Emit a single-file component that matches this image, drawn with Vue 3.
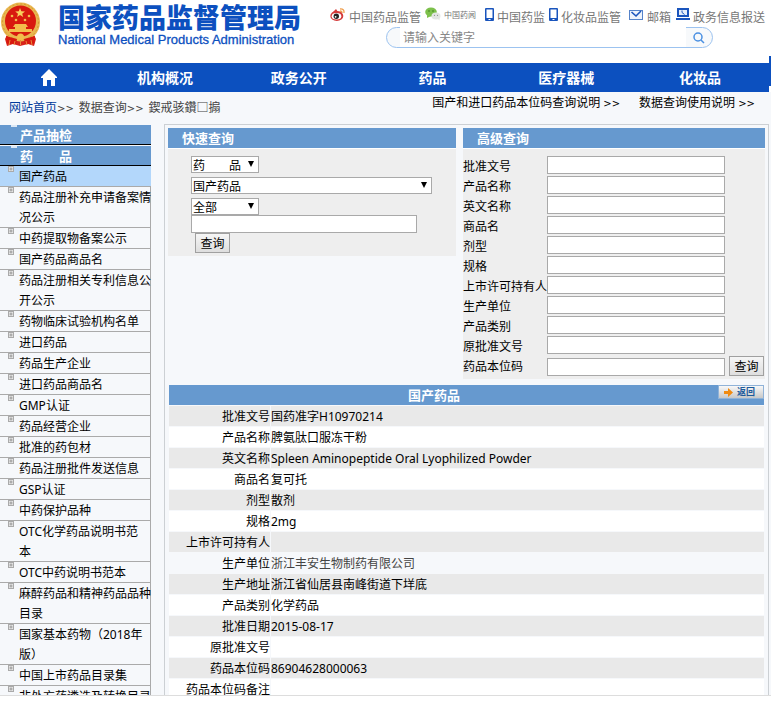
<template>
  <div class="page">
    <header class="header">
      <a class="logo" href="#">
        <svg class="logo__emblem" width="41" height="45" viewBox="0 0 41 45">
          <path d="M7 33 L5 37 L7 44 L13 42 L20 44 L28 42 L34 44 L36 37 L34 33 Z" fill="#d8241c" />
          <circle cx="20.500" cy="20" r="19.500" fill="#e9b64f" />
          <circle cx="20.500" cy="20" r="18" fill="none" stroke="#d29a35" stroke-width="1" stroke-dasharray="2 2" />
          <circle cx="20.500" cy="19" r="15.500" fill="#d8190f" />
          <path d="M20 6 L21.300 9.300 L25 9.500 L22.200 11.700 L23.200 15 L20 13.100 L17 15 L18 11.700 L15.200 9.500 L18.800 9.300 Z" fill="#f8cf5d" />
          <g fill="#f3bd4c">
            <circle cx="12" cy="14" r="1.300" />
            <circle cx="16" cy="18" r="1.300" />
            <circle cx="25" cy="18" r="1.300" />
            <circle cx="29" cy="14" r="1.300" />
            <path d="M15 22 H26 L28 25 H13 Z" />
            <path d="M15 25 H26 V27 H32 V30 H9 V27 H15 Z" />
            <circle cx="20.500" cy="35" r="3.500" />
          </g>
          <path d="M6 34 L17 37 L16 42 L7 42 Z M35 34 L24 37 L25 42 L34 42 Z" fill="#d8190f" />
          <path d="M10 38 L9 43 M15 39 L14 43 M20.500 38 V43 M26 39 L27 43 M31 38 L32 43" stroke="#e98a3c" stroke-width="1" />
        </svg>
        <span class="logo__text">
          <strong class="logo__title">国家药品监督管理局</strong>
          <span class="logo__sub">National Medical Products Administration</span>
        </span>
      </a>

      <div class="tools">
        <div class="tools__links">
          <a class="tool" href="#">
            <svg width="16" height="15" viewBox="0 0 16 15">
              <path d="M10 2 Q14.500 1.500 14 6 M10 4 Q12 4 12 6" fill="none" stroke="#f0a050" stroke-width="1.300" />
              <ellipse cx="6.800" cy="9" rx="6.500" ry="5" fill="#d43a3a" />
              <path d="M2 6 L6 2 L8 5 Z" fill="#d43a3a" />
              <ellipse cx="6.500" cy="9.300" rx="4.800" ry="3.300" fill="#fff" />
              <circle cx="6.300" cy="9.300" r="2.700" fill="#222" />
              <circle cx="5.600" cy="9.800" r="0.900" fill="#fff" />
            </svg>
            <span>中国药品监管</span>
          </a>
          <a class="tool tool--small" href="#">
            <svg width="16" height="15" viewBox="0 0 16 15">
              <ellipse cx="6" cy="5" rx="5.800" ry="4.500" fill="#7cc04b" />
              <path d="M2 8 L2 11 L6 9 Z" fill="#7cc04b" />
              <circle cx="4" cy="4" r="0.800" fill="#3f7a20" />
              <circle cx="8" cy="4" r="0.800" fill="#3f7a20" />
              <ellipse cx="11" cy="9" rx="4.500" ry="3.600" fill="#e3e6e3" />
              <path d="M12 11 L14.500 13.500 L14.500 10 Z" fill="#e3e6e3" />
              <circle cx="9.500" cy="8.300" r="0.600" fill="#888" />
              <circle cx="12.500" cy="8.300" r="0.600" fill="#888" />
            </svg>
            <span>中国药闻</span>
          </a>
          <a class="tool" href="#">
            <svg width="9" height="15" viewBox="0 0 9 15">
              <rect x="0" y="1" width="9" height="13" rx="1" fill="#1a55bd" />
              <rect x="1.500" y="2.500" width="6" height="8.500" fill="#fff" />
              <rect x="3.500" y="12" width="2" height="1" fill="#fff" />
            </svg>
            <span>中国药监</span>
          </a>
          <a class="tool" href="#">
            <svg width="9" height="15" viewBox="0 0 9 15">
              <rect x="0" y="1" width="9" height="13" rx="1" fill="#1a55bd" />
              <rect x="1.500" y="2.500" width="6" height="8.500" fill="#fff" />
              <rect x="3.500" y="12" width="2" height="1" fill="#fff" />
            </svg>
            <span>化妆品监管</span>
          </a>
          <a class="tool tool--mail" href="#">
            <svg width="14" height="15" viewBox="0 0 14 15">
              <rect x="0.500" y="3.500" width="13" height="9" fill="#edf3fc" stroke="#5583c9" />
              <path d="M2.500 5 L7 9 L12 4" fill="none" stroke="#1a55bd" stroke-width="1.600" />
            </svg>
            <span>邮箱</span>
          </a>
          <a class="tool tool--report" href="#">
            <svg width="14" height="15" viewBox="0 0 14 15">
              <rect x="2" y="2" width="10" height="7" fill="#e6effb" stroke="#1a55bd" stroke-width="2" />
              <path d="M6 3.500 V5.500 L8.500 7.500" fill="none" stroke="#1a55bd" />
              <rect x="0" y="11" width="14" height="2" fill="#1a55bd" />
            </svg>
            <span>政务信息报送</span>
          </a>
        </div>
        <form class="search" @submit.prevent>
          <input v-model="keyword" class="search__input" type="text" placeholder="请输入关键字" aria-label="请输入关键字" />
          <button class="search__btn" type="submit" aria-label="搜索">
            <svg width="12" height="12" viewBox="0 0 12 12">
              <circle cx="5" cy="5" r="4" fill="none" stroke="#4a90e2" stroke-width="1.500" />
              <path d="M8 8 L11 11" stroke="#4a90e2" stroke-width="1.500" />
            </svg>
          </button>
        </form>
      </div>
    </header>

    <nav class="nav">
      <a class="nav__home" href="#" aria-label="首页">
        <svg width="16" height="17" viewBox="0 0 16 17">
          <path d="M8 0 L16 8 V9 H14 V17 H10 V11 H6 V17 H2 V9 H0 V8 Z" fill="#fff" />
        </svg>
      </a>
      <a v-for="item in navItems" :key="item" class="nav__item" href="#">{{ item }}</a>
    </nav>

    <div class="content">
      <div class="crumbs">
        <div class="crumbs__path">
          <span><a class="crumbs__home" href="#">网站首页</a><span class="arrows">&gt;&gt;</span></span>
          <span><a href="#">数据查询</a><span class="arrows">&gt;&gt;</span></span>
          <span>鍥戒骇鑽□搧</span>
        </div>
        <div class="crumbs__help">
          <a href="#">国产和进口药品本位码查询说明 <span class="arrows">&gt;&gt;</span></a>
          <a href="#">数据查询使用说明 <span class="arrows">&gt;&gt;</span></a>
        </div>
      </div>

      <div class="columns">
        <aside class="side">
          <a v-for="group in groups" :key="group" class="side__group" href="#">{{ group }}</a>
          <ul class="side__list">
            <li
              v-for="(item, i) in sideItems"
              :key="item"
              class="side__item"
              :class="{ 'side__item--active': i === 0 }"
            >
              <svg class="side__icon" width="6" height="6" viewBox="0 0 6 6">
                <rect x="0.500" y="0.500" width="5" height="5" fill="#e4e4e4" stroke="#aaa" />
                <path d="M1.500 3 H4.500 M3 1.500 V4.500" stroke="#999" />
              </svg>
              <a href="#">{{ item }}</a>
            </li>
          </ul>
        </aside>

        <main class="main">
          <div class="forms">
            <section class="panel panel--quick">
              <h2 class="panel__title">快速查询</h2>
              <form class="quick" @submit.prevent>
                <span class="pick">
                  <select aria-label="类别"><option>药　　品</option></select>
                </span>
                <span class="pick pick--wide">
                  <select aria-label="数据库"><option>国产药品</option></select>
                </span>
                <span class="pick pick--last">
                  <select aria-label="范围"><option>全部</option></select>
                </span>
                <input class="field quick__input" type="text" aria-label="关键字" />
                <button class="btn quick__btn" type="submit">查询</button>
              </form>
            </section>

            <section class="panel panel--advanced">
              <h2 class="panel__title">高级查询</h2>
              <form class="advanced" @submit.prevent>
                <div v-for="(name, i) in fields" :key="name" class="advanced__row">
                  <label :for="'field-' + i">{{ name }}</label>
                  <input :id="'field-' + i" class="field" type="text" />
                  <button v-if="i === fields.length - 1" class="btn" type="submit">查询</button>
                </div>
              </form>
            </section>
          </div>

          <table class="result">
            <colgroup>
              <col class="result__names" />
              <col />
            </colgroup>
            <thead>
              <tr>
                <th colspan="2">
                  <div class="result__head">
                    <span class="result__title">国产药品</span>
                    <button class="back" type="button">
                      <svg width="9" height="9" viewBox="0 0 9 9">
                        <path d="M0 3 H4 V0 L9 4.500 L4 9 V6 H0 Z" fill="#f08a10" />
                      </svg>
                      返回
                    </button>
                  </div>
                </th>
              </tr>
            </thead>
            <tbody>
              <tr v-for="row in rows" :key="row.label" :class="{ linked: row.link }">
                <th scope="row">{{ row.label }}</th>
                <td>
                  <a v-if="row.link" href="#">{{ row.value }}</a>
                  <template v-else>{{ row.value }}</template>
                </td>
              </tr>
            </tbody>
          </table>
        </main>
      </div>
    </div>
  </div>
</template>

<script setup>
import { ref } from 'vue';

const keyword = ref('');

const navItems = ['机构概况', '政务公开', '药品', '医疗器械', '化妆品'];

const groups = ['产品抽检', '药　　品'];

const sideItems = [
  '国产药品',
  '药品注册补充申请备案情\n况公示',
  '中药提取物备案公示',
  '国产药品商品名',
  '药品注册相关专利信息公\n开公示',
  '药物临床试验机构名单',
  '进口药品',
  '药品生产企业',
  '进口药品商品名',
  'GMP认证',
  '药品经营企业',
  '批准的药包材',
  '药品注册批件发送信息',
  'GSP认证',
  '中药保护品种',
  'OTC化学药品说明书范\n本',
  'OTC中药说明书范本',
  '麻醉药品和精神药品品种\n目录',
  '国家基本药物（2018年\n版）',
  '中国上市药品目录集',
  '非处方药遴选及转换目录',
];

const fields = [
  '批准文号',
  '产品名称',
  '英文名称',
  '商品名',
  '剂型',
  '规格',
  '上市许可持有人',
  '生产单位',
  '产品类别',
  '原批准文号',
  '药品本位码',
];

const rows = [
  { label: '批准文号', value: '国药准字H10970214' },
  { label: '产品名称', value: '脾氨肽口服冻干粉' },
  { label: '英文名称', value: 'Spleen Aminopeptide Oral Lyophilized Powder' },
  { label: '商品名', value: '复可托' },
  { label: '剂型', value: '散剂' },
  { label: '规格', value: '2mg' },
  { label: '上市许可持有人', value: '' },
  { label: '生产单位', value: '浙江丰安生物制药有限公司', link: true },
  { label: '生产地址', value: '浙江省仙居县南峰街道下垟底' },
  { label: '产品类别', value: '化学药品' },
  { label: '批准日期', value: '2015-08-17' },
  { label: '原批准文号', value: '' },
  { label: '药品本位码', value: '86904628000063' },
  { label: '药品本位码备注', value: '' },
];
</script>

<style>
body {
  background: #fff;
}
</style>

<style scoped>
.page,
.page * {
  box-sizing: border-box;
}

.page {
  display: flex;
  flex-direction: column;
  height: 100vh;
  padding-bottom: 6px;
  overflow: hidden;
  font-family: "Noto Sans", "Noto Sans CJK SC", sans-serif;
  font-size: 12px;
  line-height: 20px;
  color: #000;
}

a {
  color: inherit;
  text-decoration: none;
}

input,
select,
button {
  font-family: inherit;
  font-size: 12px;
  color: inherit;
  margin: 0;
}

svg {
  display: block;
  flex: none;
}

.arrows {
  font-family: "DejaVu Sans", sans-serif;
  font-size: 10px;
}

/* header */
.header {
  display: flex;
  justify-content: space-between;
  flex: none;
  height: 63px;
}

.logo {
  display: flex;
  gap: 17px;
  padding-top: 2px;
  color: #0c50bf;
  white-space: nowrap;
}

.logo__text {
  display: flex;
  flex-direction: column;
}

.logo__title {
  font-size: 27px;
  font-weight: 900;
  line-height: 32px;
}

.logo__sub {
  font-family: "Liberation Sans", sans-serif;
  font-size: 13px;
  line-height: 12px;
  -webkit-text-stroke: 0.3px #0c50bf;
}

.tools {
  padding: 7px 6px 0 0;
  color: #777;
  white-space: nowrap;
}

.tools__links {
  display: flex;
  gap: 4px;
  height: 20px;
}

.tool {
  display: flex;
  gap: 3px;
}

.tool span {
  line-height: 22px;
}

.tool--small {
  margin-right: 5px;
}

.tool--small span {
  font-size: 8px;
  line-height: 16px;
}

.tool--mail {
  gap: 4px;
  margin-left: 4px;
}

.tool--report {
  margin-left: 1px;
}

.search {
  display: flex;
  width: 327px;
  height: 21px;
  margin-left: 56px;
  border: 1px solid #9cc3f0;
  border-radius: 11px;
  background: #f7f9fb;
}

.search__input {
  flex: 1;
  min-width: 0;
  height: 20px;
  margin: -1px 0 0 13px;
  padding: 0 3px;
  border: 0;
  outline: 0;
  background: #fff;
}

.search__input::placeholder {
  color: #888;
  opacity: 1;
}

.search__btn {
  display: flex;
  align-items: center;
  justify-content: center;
  width: 26px;
  padding: 0;
  border: 0;
  background: none;
}

/* nav */
.nav {
  position: relative;
  display: flex;
  flex: none;
  height: 29px;
  margin-right: 2px;
  padding-right: 2px;
  background: #0c50bf;
  color: #fff;
  font-size: 14px;
  font-weight: bold;
  line-height: 30px;
}

/* edge of the drop-down layer beside the bar */
.nav::after {
  content: '';
  position: absolute;
  top: -7px;
  right: -2px;
  width: 2px;
  height: 30px;
  background: #0c50bf;
}

.nav__home {
  display: flex;
  align-items: center;
  justify-content: center;
  width: 98px;
}

.nav__item {
  flex: 1;
  text-align: center;
}

/* content */
.content {
  display: flex;
  flex-direction: column;
  flex: 1;
  min-height: 0;
  overflow: hidden;
  background: #f6f8fb;
  border-bottom: 1px solid #ddd;
}

.crumbs {
  display: flex;
  justify-content: space-between;
  flex: none;
  height: 32px;
  padding: 0 16px 0 9px;
  white-space: nowrap;
}

.crumbs__path {
  display: flex;
  gap: 5px;
  padding-top: 6px;
  color: #444;
}

.crumbs__home {
  color: #003a9b;
}

.crumbs__help {
  display: flex;
  gap: 19px;
  padding-top: 1px;
}

.columns {
  display: flex;
  gap: 13px;
  flex: 1;
  min-height: 0;
}

/* sidebar */
.side {
  flex: none;
  width: 151px;
  padding-top: 1px;
}

.side__group {
  display: block;
  height: 20px;
  margin-bottom: 1px;
  padding-left: 20px;
  background: #6699cf linear-gradient(#dce8f5, #dce8f5) 11px 0 / 6px 2px no-repeat;
  border-bottom: 1px solid #000;
  color: #fff;
  font-size: 13px;
  font-weight: bold;
}

.side__group:last-of-type {
  margin-bottom: 0;
}

.side__list {
  margin: 0;
  padding: 0;
  list-style: none;
}

.side__item {
  display: flex;
  gap: 5px;
  padding-left: 8px;
  border-bottom: 1px solid #aaa;
  box-shadow: inset -1px 0 #aaa;
  white-space: pre;
}

.side__item a {
  margin-bottom: -1px;
  padding-top: 1px;
}

.side__item--active {
  background: #b3d7fb;
  box-shadow: none;
}

/* main */
.main {
  flex: 1;
  min-width: 0;
  margin-right: 2px;
  padding: 3px 3px 0;
  border: 1px solid #ccd0d4;
  border-bottom: 0;
}

.forms {
  display: flex;
  align-items: flex-start;
  gap: 7px;
  margin-bottom: 5px;
}

.panel {
  background: #eee;
}

.panel--quick {
  flex: 288;
}

.panel--advanced {
  flex: 302;
}

.panel__title {
  height: 21px;
  margin: 0;
  padding-left: 14px;
  background: #6699cf;
  border-bottom: 1px solid #fff;
  color: #fff;
  font-size: 13px;
  line-height: 20px;
}

.quick {
  display: flex;
  flex-direction: column;
  align-items: flex-start;
  padding: 7px 23px 3px;
}

.pick {
  position: relative;
  width: 68px;
  height: 17px;
  margin-bottom: 4px;
}

.pick--wide {
  width: 241px;
}

.pick--last {
  margin-bottom: 0;
}

.pick::after {
  content: '';
  position: absolute;
  top: 5px;
  right: 5px;
  border: solid transparent;
  border-width: 6px 3px 0;
  border-top-color: #000;
  pointer-events: none;
}

.pick select {
  display: block;
  width: 100%;
  height: 17px;
  padding: 1px 0 0 1px;
  appearance: none;
  border: 1px solid #a9a9a9;
  border-radius: 0;
  background: #fff;
  line-height: 15px;
}

.field {
  height: 18px;
  padding: 0 2px;
  border: 1px solid #a9a9a9;
  background: #fff;
}

.quick__input {
  width: 226px;
}

.btn {
  width: 35px;
  height: 20px;
  padding: 1px 0 0;
  border: 1px solid #a0a0a0;
  background: linear-gradient(#f6f6f6, #dedede);
  line-height: 17px;
}

.quick__btn {
  margin-left: 4px;
}

.advanced {
  padding: 7px 1px 3px 0;
}

.advanced__row {
  display: flex;
  height: 20px;
}

.advanced__row label {
  flex: none;
  width: 84px;
  padding-top: 1px;
}

.advanced__row .field {
  flex: none;
  width: 178px;
}

.advanced__row:last-child .field {
  align-self: flex-end;
}

.advanced__row .btn {
  margin-left: 4px;
}

/* result table */
.result {
  width: 100%;
  table-layout: fixed;
  border-collapse: separate;
  border-spacing: 1px;
}

.result__names {
  width: 101px;
}

.result th,
.result td {
  height: 20px;
  padding: 0;
}

.result thead th {
  background: #6699cf;
  color: #fff;
  font-size: 13px;
}

.result__head {
  display: flex;
}

.result__title {
  flex: 1;
}

.back {
  display: flex;
  align-items: center;
  gap: 4px;
  width: 46px;
  height: 14px;
  margin-left: 19px;
  padding: 0 0 0 5px;
  border: 1px solid #8fb2d8;
  background: linear-gradient(#f8f8f8, #c8c8c8);
  color: #1c5a9c;
  font-size: 9px;
  font-weight: bold;
  line-height: 12px;
  white-space: nowrap;
}

.result tbody th,
.result tbody td {
  padding-top: 2px;
  line-height: 18px;
}

.result tbody th {
  font-weight: normal;
  text-align: right;
  white-space: nowrap;
}

.result tbody tr:nth-child(odd) > * {
  background: #e9e9e9;
}

.result tbody tr:nth-child(even) > * {
  background: #fff;
}

.result tbody tr.linked > * {
  background: none;
}

.linked td {
  color: #444;
}
</style>
